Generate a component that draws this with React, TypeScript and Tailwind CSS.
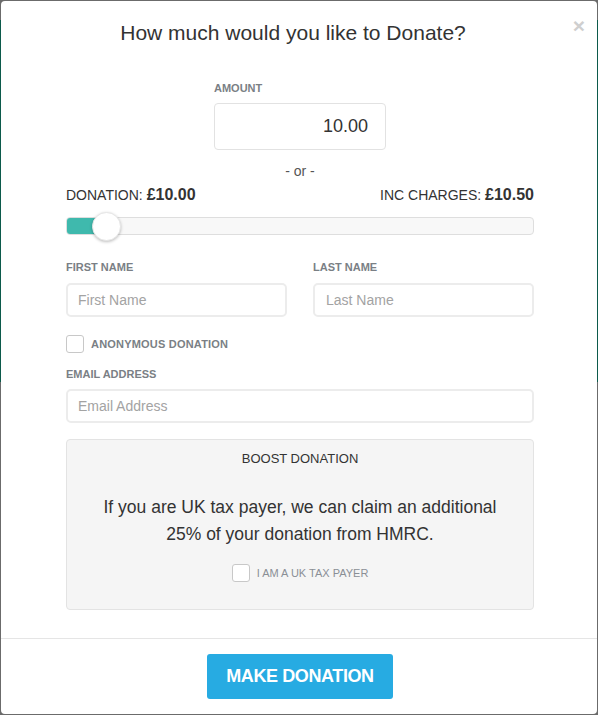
export default function App() {
  return (
    <div
      className="min-h-[715px] h-[715px] p-px bg-[linear-gradient(to_bottom,#6b6b6b_0px,#6b6b6b_20px,#0c5a4b_20px,#0c5a4b_382px,#6b6b6b_382px)]"
      style={{ fontFamily: '"Liberation Sans", Arial, sans-serif' }}
    >
      <div className="relative h-full bg-white rounded-[4px] flex flex-col text-[#333]">
        <button className="absolute right-[12px] top-[14px] text-[21px] leading-[21px] font-bold text-[#cfcfcf]">
          ×
        </button>

        <div className="pl-[65px] pr-[63px]">
          <h1 className="pt-[18px] pr-[14px] text-[21px] leading-[28px] text-center text-[#333]">
            How much would you like to Donate?
          </h1>

          <div className="mt-[34px] flex flex-col items-center">
            <div className="w-[172px]">
              <label className="block text-[11px] leading-[14px] font-bold text-[#7a7f85] uppercase">
                Amount
              </label>
              <input
                defaultValue="10.00"
                className="mt-[8px] w-[172px] h-[47px] border border-[#e2e2e2] rounded-[4px] px-[17px] text-right text-[18px] text-[#333] outline-none"
              />
            </div>
            <div className="mt-[11px] text-[14px] leading-[20px] text-[#555]">- or -</div>
          </div>

          <div className="mt-[4px] flex justify-between items-center h-[20px] text-[14px] text-[#333]">
            <span>
              DONATION: <b className="text-[16px]">£10.00</b>
            </span>
            <span>
              INC CHARGES: <b className="text-[16px]">£10.50</b>
            </span>
          </div>

          <div className="relative mt-[12px] h-[18px] rounded-[4px] border border-[#dedede] bg-[#f8f8f8]">
            <div className="h-full w-[40px] rounded-l-[3px] bg-[#3fb9ad]" />
            <div className="absolute left-[25px] top-[-6px] w-[29px] h-[29px] rounded-full bg-white border border-[#e6e6e6] shadow-[0_1px_3px_rgba(0,0,0,0.25)]" />
          </div>

          <div className="mt-[25px] grid grid-cols-[221px_221px] justify-between">
            <div>
              <label className="block text-[11px] leading-[14px] font-bold text-[#7a7f85] uppercase">
                First Name
              </label>
              <input
                placeholder="First Name"
                className="mt-[9px] w-full h-[34px] border-2 border-[#ececec] rounded-[5px] px-[10px] text-[14px] placeholder:text-[#a3a3a3] outline-none"
              />
            </div>
            <div>
              <label className="block text-[11px] leading-[14px] font-bold text-[#7a7f85] uppercase">
                Last Name
              </label>
              <input
                placeholder="Last Name"
                className="mt-[9px] w-full h-[34px] border-2 border-[#ececec] rounded-[5px] px-[11px] text-[14px] placeholder:text-[#a3a3a3] outline-none"
              />
            </div>
          </div>

          <div className="mt-[18px] flex items-center gap-[7px]">
            <span className="w-[18px] h-[18px] rounded-[3px] border border-[#c8c8c8] bg-white" />
            <span className="text-[11px] font-bold text-[#7a7f85] tracking-[0.2px]">ANONYMOUS DONATION</span>
          </div>

          <label className="mt-[14px] block text-[11px] leading-[14px] font-bold text-[#7a7f85] uppercase">
            Email Address
          </label>
          <input
            placeholder="Email Address"
            className="mt-[8px] w-full h-[34px] border-2 border-[#ececec] rounded-[5px] px-[10px] text-[14px] placeholder:text-[#a3a3a3] outline-none"
          />

          <div className="mt-[16px] h-[171px] rounded-[4px] border border-[#e3e3e3] bg-[#f5f5f5] flex flex-col items-center">
            <div className="mt-[11px] text-[13px] leading-[16px] font-medium text-[#333]">BOOST DONATION</div>
            <p className="mt-[27px] text-[17.5px] leading-[27px] text-center text-[#333]">
              If you are UK tax payer, we can claim an additional
              <br />
              25% of your donation from HMRC.
            </p>
            <div className="mt-[16px] flex items-center gap-[7px]">
              <span className="w-[18px] h-[18px] rounded-[3px] border border-[#c8c8c8] bg-white" />
              <span className="text-[11px] text-[#8a8f95]">I AM A UK TAX PAYER</span>
            </div>
          </div>
        </div>

        <div className="mt-[28px] border-t border-[#e5e5e5] flex justify-center pt-[15px]">
          <button className="ml-[2px] w-[186px] h-[45px] rounded-[3px] bg-[#27abe2] text-white text-[18px] font-bold tracking-[-0.4px]">
            MAKE DONATION
          </button>
        </div>
      </div>
    </div>
  );
}
